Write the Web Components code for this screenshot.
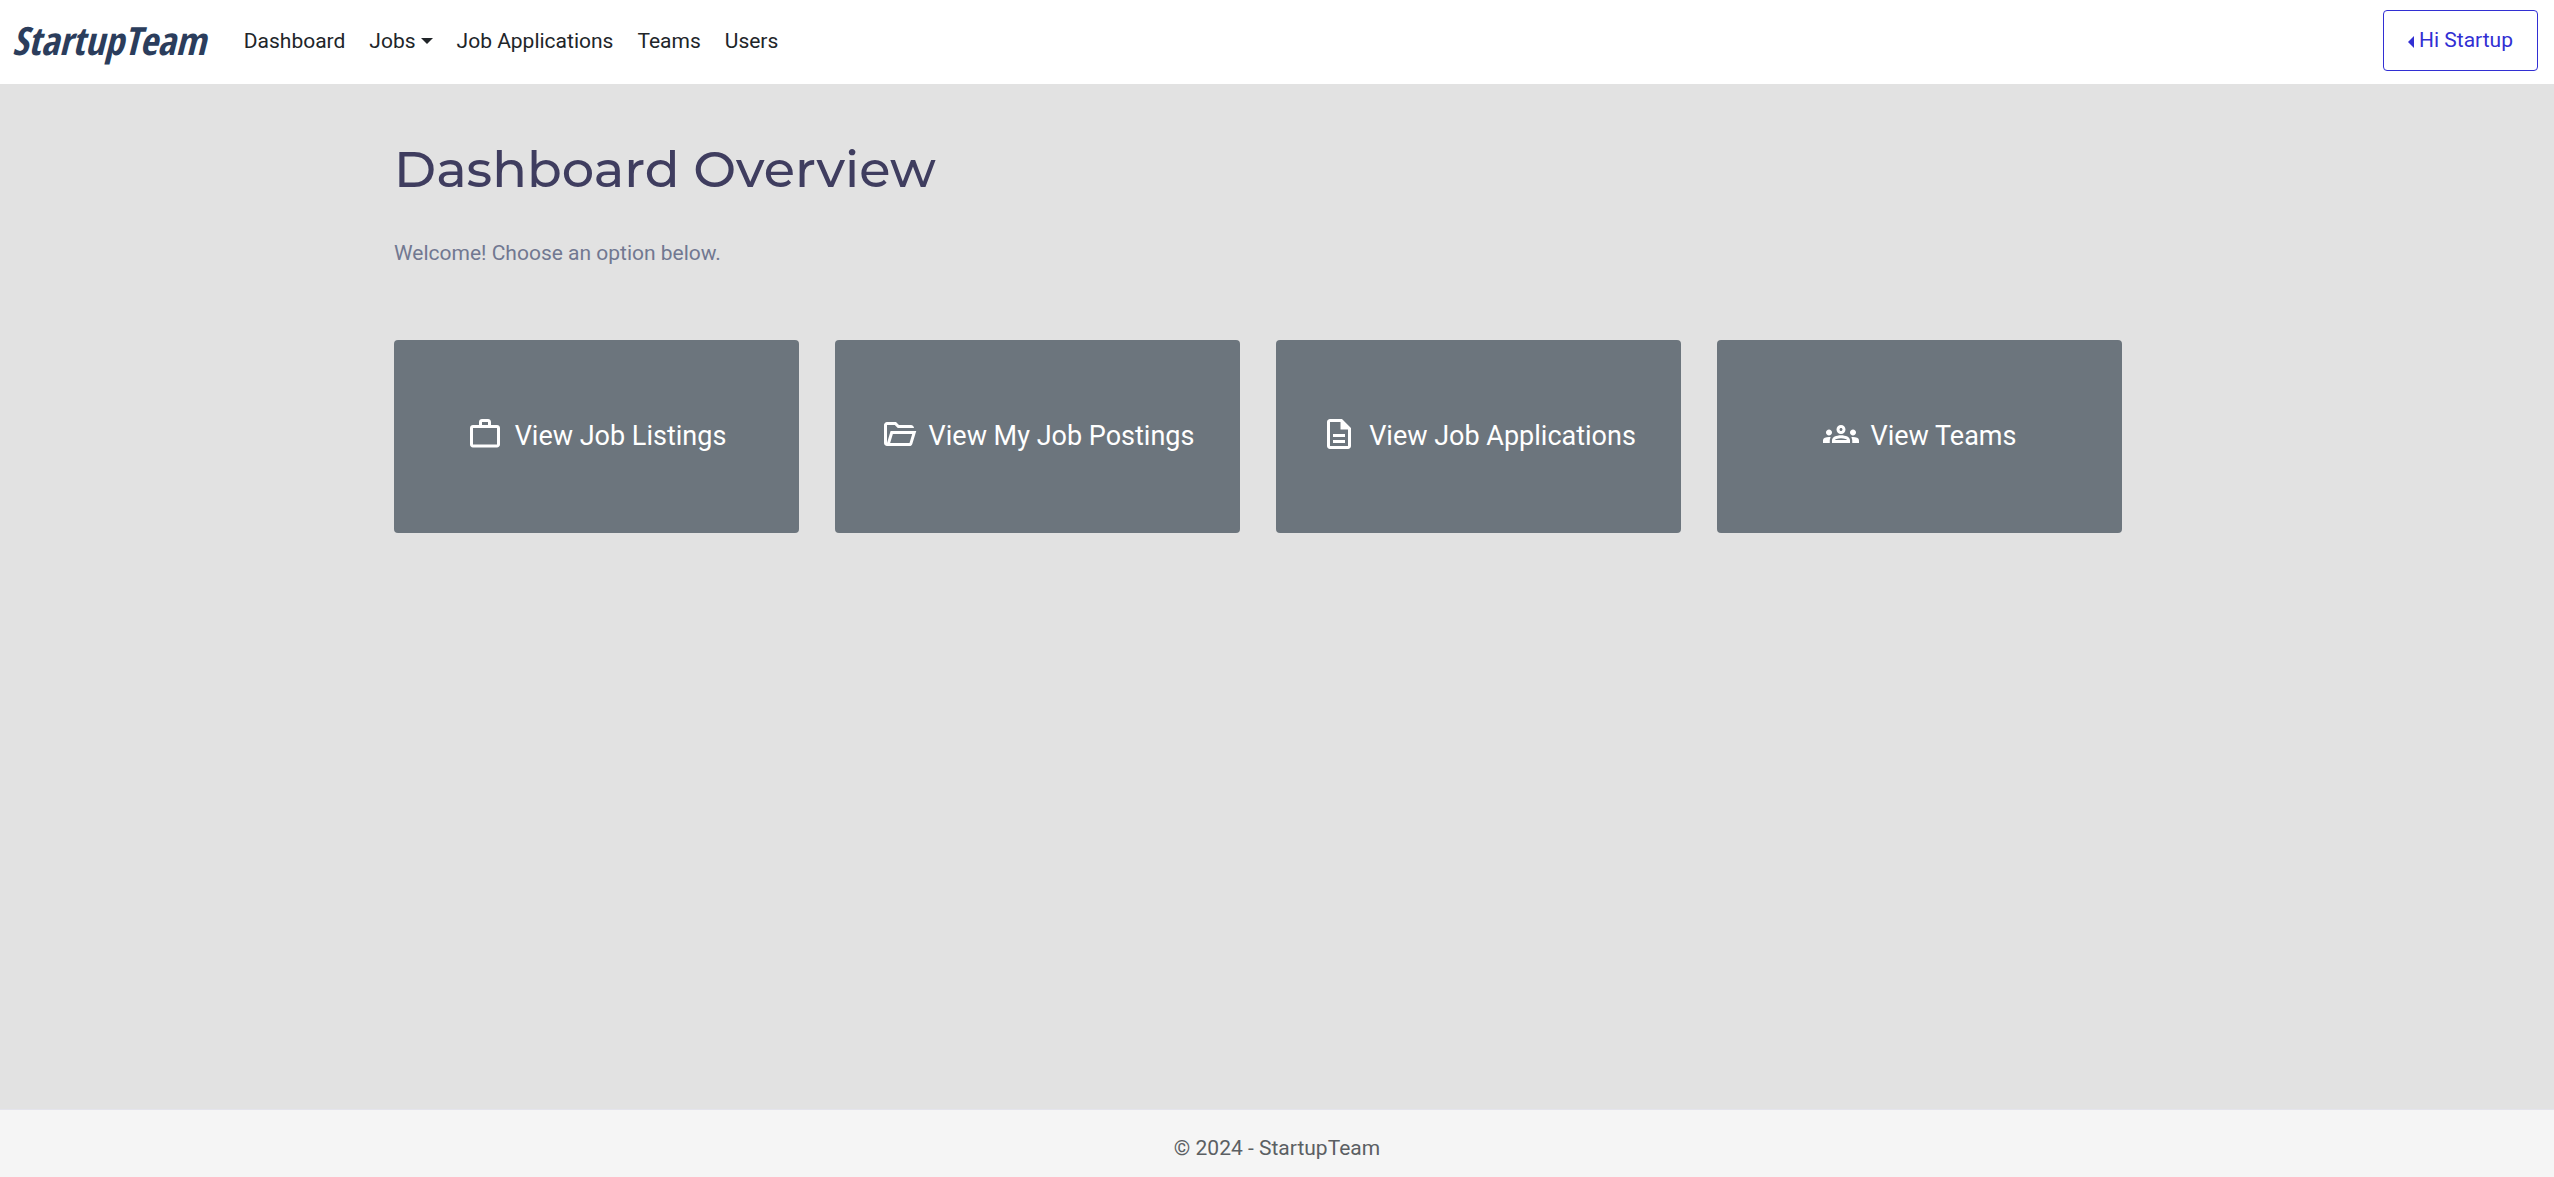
<!DOCTYPE html>
<html lang="en">
<head>
<meta charset="utf-8">
<meta name="viewport" content="width=device-width, initial-scale=1">
<title>Dashboard - StartupTeam</title>
<style>
  html, body { margin: 0; height: 100%; }
  body {
    font: 400 21px/32px Roboto, "Liberation Sans", sans-serif;
    color: #212529;
    background: #e2e2e2;
  }
</style>
</head>
<body>
<app-shell>
  <site-header slot="header">
    <nav-link href="#dashboard">Dashboard</nav-link>
    <nav-menu>Jobs</nav-menu>
    <nav-link href="#applications">Job Applications</nav-link>
    <nav-link href="#teams">Teams</nav-link>
    <nav-link href="#users">Users</nav-link>
    <user-button slot="user">Hi Startup</user-button>
  </site-header>
  <page-intro heading="Dashboard Overview">Welcome! Choose an option below.</page-intro>
  <card-grid>
    <action-card icon="work" href="#listings">View Job Listings</action-card>
    <action-card icon="folder" href="#postings">View My Job Postings</action-card>
    <action-card icon="document" href="#applications">View Job Applications</action-card>
    <action-card icon="groups" href="#teams">View Teams</action-card>
  </card-grid>
  <site-footer slot="footer">© 2024 - StartupTeam</site-footer>
</app-shell>

<script>
const define = (name, render) => customElements.define(name, class extends HTMLElement {
  constructor() {
    super();
    this.attachShadow({ mode: 'open' }).innerHTML = render(this);
  }
});

const icons = {
  work: 'M14 6V4h-4v2h4zM4 8v11h16V8H4zm16-2c1.11 0 2 .89 2 2v11c0 1.11-.89 2-2 2H4c-1.11 0-2-.89-2-2V8c0-1.11.89-2 2-2h4V4c0-1.11.89-2 2-2h4c1.11 0 2 .89 2 2v2h4z',
  folder: 'M4 20q-.825 0-1.412-.587T2 18V6q0-.825.588-1.412T4 4h6l2 2h8q.825 0 1.413.588T22 8H11.175l-2-2H4v12l2.4-8h17.1l-2.575 8.575q-.2.65-.737 1.038T19 20zm2.1-2H19l1.8-6H7.9z',
  document: 'M8 16h8v2H8zm0-4h8v2H8zm6-10H6c-1.1 0-2 .9-2 2v16c0 1.1.89 2 1.99 2H18c1.1 0 2-.9 2-2V8l-6-6zm4 18H6V4h7v5h5v11z',
  groups: 'M4 13c1.1 0 2-.9 2-2s-.9-2-2-2-2 .9-2 2 .9 2 2 2zm1.13 1.1c-.37-.06-.74-.1-1.13-.1-.99 0-1.93.21-2.78.58C.48 14.9 0 15.62 0 16.43V18h4.5v-1.61c0-.83.23-1.61.63-2.29zM20 13c1.1 0 2-.9 2-2s-.9-2-2-2-2 .9-2 2 .9 2 2 2zm4 3.43c0-.81-.48-1.53-1.22-1.85-.85-.37-1.79-.58-2.78-.58-.39 0-.76.04-1.13.1.4.68.63 1.46.63 2.29V18H24v-1.57zM16.24 13.65c-1.17-.52-2.61-.9-4.24-.9s-3.07.39-4.24.9C6.68 14.13 6 15.21 6 16.39V18h12v-1.61c0-1.18-.68-2.26-1.76-2.74zM8.07 16c.09-.23.13-.39.91-.69.97-.38 1.99-.56 3.02-.56s2.05.18 3.02.56c.77.3.81.46.91.69H8.07zM12 8c.55 0 1 .45 1 1s-.45 1-1 1-1-.45-1-1 .45-1 1-1m0-2c-1.66 0-3 1.34-3 3s1.34 3 3 3 3-1.34 3-3-1.34-3-3-3z'
};

define('app-shell', () => `
  <style>
    :host { display: flex; flex-direction: column; min-height: 100%; }
    main { flex: 1; width: 100%; max-width: 1766px; margin: 0 auto; padding: 54px 0; box-sizing: border-box; }
  </style>
  <slot name="header"></slot>
  <main><slot></slot></main>
  <slot name="footer"></slot>`);

define('site-header', () => `
  <style>
    :host { display: block; background: #fff; }
    header { display: flex; align-items: center; padding: 10px 16px 13px 12px; }
    .logo {
      margin-right: 26px; padding-bottom: 2px; color: #2b3d5c; text-decoration: none;
      font: italic 700 39px/56px "Open Sans Condensed", "Liberation Sans Narrow", sans-serif;
    }
    nav { display: flex; flex: 1; align-items: center; }
  </style>
  <header>
    <a class="logo" href="#home">StartupTeam</a>
    <nav aria-label="Main"><slot></slot></nav>
    <slot name="user"></slot>
  </header>`);

define('nav-link', el => `
  <style>
    :host { display: block; }
    a { display: block; padding: 0 12px; color: inherit; text-decoration: none; }
  </style>
  <a href="${el.getAttribute('href')}"><slot></slot></a>`);

define('nav-menu', () => `
  <style>
    :host { display: block; }
    button {
      display: flex; align-items: center; gap: 5px; padding: 0 12px;
      border: 0; background: none; color: inherit; font: inherit;
    }
    svg { width: 12px; height: 6px; }
  </style>
  <button type="button" aria-haspopup="true" aria-expanded="false">
    <slot></slot><svg viewBox="0 0 12 6" fill="currentColor" aria-hidden="true"><path d="M0 0h12L6 6z"/></svg>
  </button>`);

define('user-button', () => `
  <style>
    :host { display: block; }
    button {
      display: flex; align-items: center; gap: 5px; padding: 13px 24px 14px;
      border: 1px solid #322fd3; border-radius: 4px;
      background: #fff; color: #322fd3; font: inherit;
    }
    svg { width: 6px; height: 12px; margin-top: 3px; }
  </style>
  <button type="button" aria-haspopup="true" aria-expanded="false">
    <svg viewBox="0 0 6 12" fill="currentColor" aria-hidden="true"><path d="M6 0v12L0 6z"/></svg><slot></slot>
  </button>`);

define('page-intro', el => `
  <style>
    :host { display: block; margin-bottom: 71px; }
    h1 { margin: 0 0 37px; color: #3f3d5f; font: 500 51px/62px Montserrat, Inter, sans-serif; }
    p { margin: 0; color: #717891; }
  </style>
  <h1>${el.getAttribute('heading')}</h1>
  <p><slot></slot></p>`);

define('card-grid', () => `
  <style>
    :host {
      display: grid; grid-template-columns: repeat(auto-fit, minmax(360px, 1fr));
      gap: 36px; padding-right: 38px;
    }
  </style>
  <slot></slot>`);

define('action-card', el => `
  <style>
    :host { display: block; }
    a {
      display: flex; align-items: center; justify-content: center; gap: 12px;
      padding: 76px 16px 77px; border-radius: 4px;
      background: #6c757d; color: #fff; font-size: 27px; line-height: 40px; text-decoration: none;
    }
    svg { width: 36px; height: 36px; margin-bottom: 4px; flex: none; }
  </style>
  <a href="${el.getAttribute('href')}">
    <svg viewBox="0 0 24 24" fill="currentColor" aria-hidden="true"><path d="${icons[el.getAttribute('icon')]}"/></svg>
    <span><slot></slot></span>
  </a>`);

define('site-footer', () => `
  <style>
    :host { display: block; background: #f5f5f5; }
    footer { border-top: 1px solid #e4e4ec; padding: 22px 16px 13px; color: #5b5f63; text-align: center; }
  </style>
  <footer><slot></slot></footer>`);
</script>
</body>
</html>
